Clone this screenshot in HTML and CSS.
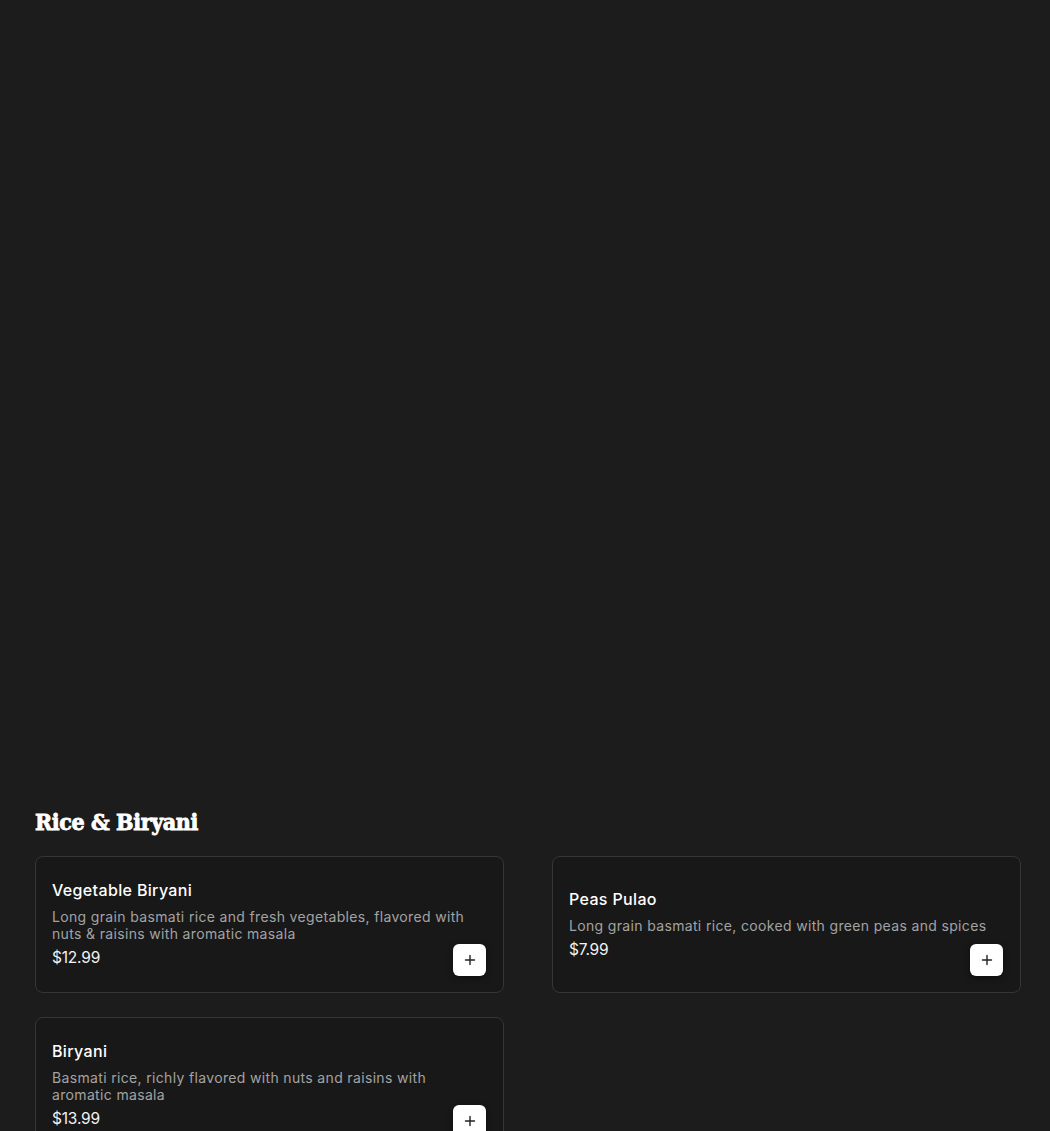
FILE: index.html
```html
<!DOCTYPE html>
<html lang="en">
<head>
<meta charset="utf-8">
<title>Menu</title>
<link rel="stylesheet" href="styles.css">
</head>
<body>
<main class="menu">
  <div class="menu-spacer"></div>
  <section class="category">
    <h2 class="category-title">Rice &amp; Biryani</h2>
    <div class="items">
      <article class="item">
        <h3 class="item-name">Vegetable Biryani</h3>
        <p class="item-desc">Long grain basmati rice and fresh vegetables, flavored with nuts &amp; raisins with aromatic masala</p>
        <p class="item-price">$12.99</p>
        <button class="add-btn" aria-label="Add"><svg viewBox="0 0 12 12" width="12" height="12"><path d="M6 1.5v9M1.5 6h9" stroke="#222" stroke-width="1.4" stroke-linecap="round"/></svg></button>
      </article>
      <article class="item">
        <h3 class="item-name">Peas Pulao</h3>
        <p class="item-desc">Long grain basmati rice, cooked with green peas and spices</p>
        <p class="item-price">$7.99</p>
        <button class="add-btn" aria-label="Add"><svg viewBox="0 0 12 12" width="12" height="12"><path d="M6 1.5v9M1.5 6h9" stroke="#222" stroke-width="1.4" stroke-linecap="round"/></svg></button>
      </article>
      <article class="item">
        <h3 class="item-name">Biryani</h3>
        <p class="item-desc">Basmati rice, richly flavored with nuts and raisins with aromatic masala</p>
        <p class="item-price">$13.99</p>
        <button class="add-btn" aria-label="Add"><svg viewBox="0 0 12 12" width="12" height="12"><path d="M6 1.5v9M1.5 6h9" stroke="#222" stroke-width="1.4" stroke-linecap="round"/></svg></button>
      </article>
    </div>
  </section>
</main>
</body>
</html>
```

FILE: styles.css
```css
html, body {
  margin: 0;
  padding: 0;
  background: #1c1c1c;
}
body {
  font-family: "Inter", "DejaVu Sans", sans-serif;
  color: #fff;
}
.menu {
  padding: 0 29px 0 35px;
}
.menu-spacer {
  height: 806px;
}
.category-title {
  margin: 0 0 18px;
  font-family: "DejaVu Serif Condensed", "DejaVu Serif", serif;
  font-weight: 900;
  font-size: 23px;
  line-height: 32px;
  letter-spacing: -0.4px;
  color: #fff;
  -webkit-text-stroke: 0.8px #fff;
}
.items {
  display: grid;
  grid-template-columns: 1fr 1fr;
  column-gap: 48px;
  row-gap: 24px;
  width: 986px;
}
.item {
  position: relative;
  display: flex;
  flex-direction: column;
  justify-content: center;
  padding: 21px 16px 22px;
  background: #181818;
  border: 1px solid #363636;
  border-radius: 8px;
}
.item-name {
  margin: 0;
  font-size: 16px;
  font-weight: 500;
  line-height: 24px;
  letter-spacing: 0.35px;
  color: #fff;
}
.item-desc {
  margin: 6px 0 0;
  font-size: 14px;
  line-height: 17px;
  letter-spacing: 0.34px;
  color: #a3a3a3;
}
.item-price {
  margin: 4px 0 0;
  font-size: 15.5px;
  font-weight: 400;
  line-height: 24px;
  letter-spacing: -0.2px;
  color: #f2f2f2;
}
.add-btn {
  position: absolute;
  right: 17px;
  bottom: 16px;
  width: 33px;
  height: 32px;
  display: flex;
  align-items: center;
  justify-content: center;
  padding: 0;
  border: none;
  border-radius: 6px;
  background: #fff;
  box-shadow: 0 2px 6px rgba(0, 0, 0, 0.45);
  cursor: pointer;
}
```
